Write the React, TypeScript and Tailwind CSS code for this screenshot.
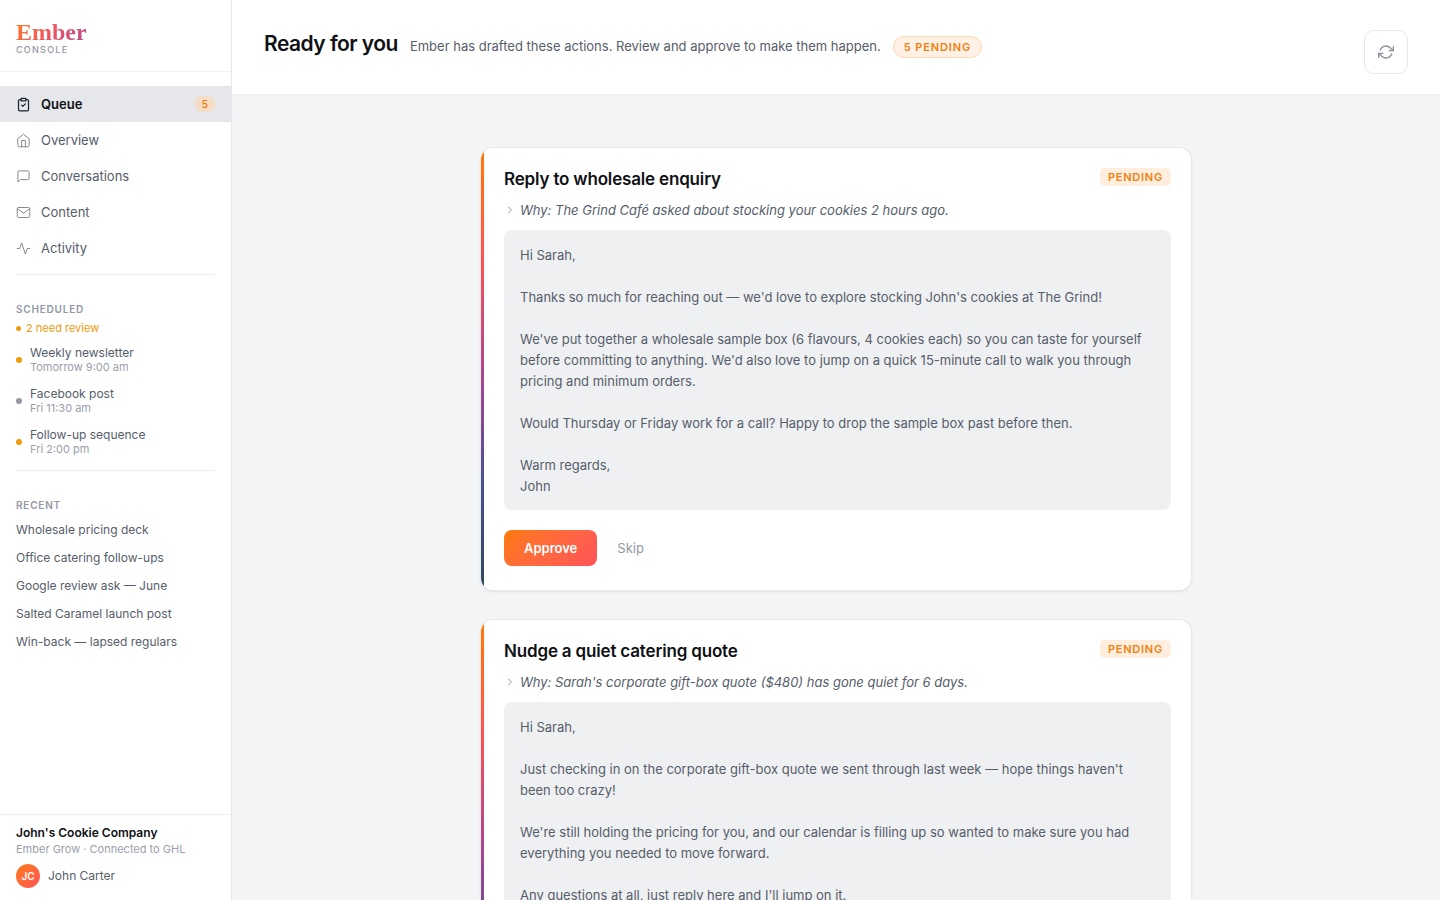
import type { ReactNode } from "react"
import { clsx } from "clsx"

type IconProps = { className?: string; width?: number; children: ReactNode }

function Icon({ className, width = 1.5, children }: IconProps) {
  return (
    <svg
      className={clsx("shrink-0", className)}
      viewBox="0 0 24 24"
      fill="none"
      stroke="currentColor"
      strokeWidth={width}
      strokeLinecap="round"
      strokeLinejoin="round"
      aria-hidden="true"
    >
      {children}
    </svg>
  )
}

const navItems = [
  {
    label: "Queue",
    count: 5,
    icon: (
      <>
        <path d="M16 4h2a2 2 0 0 1 2 2v14a2 2 0 0 1-2 2H6a2 2 0 0 1-2-2V6a2 2 0 0 1 2-2h2" />
        <rect x="8" y="2" width="8" height="4" rx="1" />
        <path d="m9 13 2 2 4-4" />
      </>
    ),
  },
  {
    label: "Overview",
    icon: (
      <>
        <path d="m3 9 9-7 9 7v11a2 2 0 0 1-2 2H5a2 2 0 0 1-2-2z" />
        <path d="M9 22V12h6v10" />
      </>
    ),
  },
  {
    label: "Conversations",
    icon: <path d="M21 15a2 2 0 0 1-2 2H7l-4 4V5a2 2 0 0 1 2-2h14a2 2 0 0 1 2 2z" />,
  },
  {
    label: "Content",
    icon: (
      <>
        <path d="M4 4h16a2 2 0 0 1 2 2v12a2 2 0 0 1-2 2H4a2 2 0 0 1-2-2V6a2 2 0 0 1 2-2z" />
        <path d="m22 6-10 7L2 6" />
      </>
    ),
  },
  {
    label: "Activity",
    icon: <path d="M22 12h-4l-3 9L9 3l-3 9H2" />,
  },
]

const scheduled = [
  { title: "Weekly newsletter", time: "Tomorrow 9:00 am", review: true },
  { title: "Facebook post", time: "Fri 11:30 am", review: false },
  { title: "Follow-up sequence", time: "Fri 2:00 pm", review: true },
]

const recent = [
  "Wholesale pricing deck",
  "Office catering follow-ups",
  "Google review ask — June",
  "Salted Caramel launch post",
  "Win-back — lapsed regulars",
]

const drafts = [
  {
    title: "Reply to wholesale enquiry",
    why: "The Grind Café asked about stocking your cookies 2 hours ago.",
    body: `Hi Sarah,

Thanks so much for reaching out — we'd love to explore stocking John's cookies at The Grind!

We've put together a wholesale sample box (6 flavours, 4 cookies each) so you can taste for yourself before committing to anything. We'd also love to jump on a quick 15-minute call to walk you through pricing and minimum orders.

Would Thursday or Friday work for a call? Happy to drop the sample box past before then.

Warm regards,
John`,
  },
  {
    title: "Nudge a quiet catering quote",
    why: "Sarah's corporate gift-box quote ($480) has gone quiet for 6 days.",
    body: `Hi Sarah,

Just checking in on the corporate gift-box quote we sent through last week — hope things haven't been too crazy!

We're still holding the pricing for you, and our calendar is filling up so wanted to make sure you had everything you needed to move forward.

Any questions at all, just reply here and I'll jump on it.

Warm regards,
John`,
  },
]

function Sidebar() {
  return (
    <aside className="flex w-58 shrink-0 flex-col border-r border-[#e5e7eb] bg-white">
      <div className="border-b border-[#f0f1f3] px-4 pt-5 pb-4">
        <p className="w-fit bg-linear-135 from-[#ff7a00] via-[#f0585c] via-45% to-[#b8458c] bg-clip-text font-['Liberation_Serif',serif] text-2xl leading-6 font-bold text-transparent">
          Ember
        </p>
        <p className="text-[9px] leading-[11px] font-medium tracking-[0.14em] text-[#9298a5]">CONSOLE</p>
      </div>

      <nav className="pt-3.5">
        {navItems.map((item, i) => (
          <a
            key={item.label}
            href="#"
            className={clsx(
              "flex h-9 items-center gap-2.5 px-4 text-[13px] leading-5",
              i === 0 ? "bg-[#e6e7ea] font-semibold text-[#0f1115]" : "text-[#565d6b]"
            )}
          >
            <Icon width={i === 0 ? 2 : 1.5} className={clsx("size-[15px]", i === 0 ? "text-[#1f2430]" : "text-[#7d828c]")}>
              {item.icon}
            </Icon>
            <span className="flex-1">{item.label}</span>
            {item.count && (
              <span className="rounded-full bg-[#f5dcc4] px-[7px] text-[10px] leading-4 font-semibold text-[#f08010]">
                {item.count}
              </span>
            )}
          </a>
        ))}
      </nav>

      <section className="mx-4 mt-2 border-t border-[#eceef0] pt-[27px]">
        <h2 className="text-[10px] leading-[14px] font-semibold tracking-[0.08em] text-[#9298a5]">SCHEDULED</h2>
        <p className="mt-1 flex items-center gap-[5px] text-[11px] leading-4 text-[#ee9b0c]">
          <span className="size-[5px] rounded-full bg-[#ee9b0c]" />2 need review
        </p>
        <ul className="mt-[9px] flex flex-col gap-3">
          {scheduled.map((item) => (
            <li key={item.title} className="flex items-center gap-2">
              <span className={clsx("size-1.5 rounded-full", item.review ? "bg-[#ee9b0c]" : "bg-[#9598a0]")} />
              <div>
                <p className="text-xs leading-[15px] text-[#565d6b]">{item.title}</p>
                <p className="text-[11px] leading-[14px] text-[#9aa0ac]">{item.time}</p>
              </div>
            </li>
          ))}
        </ul>
      </section>

      <section className="mx-4 mt-3.5 border-t border-[#eceef0] pt-[27px]">
        <h2 className="text-[10px] leading-[14px] font-semibold tracking-[0.08em] text-[#9298a5]">RECENT</h2>
        <ul className="mt-1">
          {recent.map((title) => (
            <li key={title}>
              <a href="#" className="block truncate text-xs leading-7 text-[#565d6b]">{title}</a>
            </li>
          ))}
        </ul>
      </section>

      <footer className="mt-auto border-t border-[#eceef0] px-4 pt-2.5 pb-3">
        <p className="text-xs leading-4 font-semibold text-[#0f1115]">John's Cookie Company</p>
        <p className="text-[11px] leading-4 text-[#9aa0ac]">Ember Grow · Connected to GHL</p>
        <div className="mt-[7px] flex items-center gap-2">
          <span className="flex size-6 items-center justify-center rounded-full bg-linear-135 from-[#ff7a00] to-[#ff5252] text-[10px] font-semibold text-white">
            JC
          </span>
          <span className="text-xs text-[#565d6b]">John Carter</span>
        </div>
      </footer>
    </aside>
  )
}

function DraftCard({ title, why, body }: (typeof drafts)[number]) {
  return (
    <article className="flex overflow-hidden rounded-xl bg-white shadow-[0_0_0_1px_#e8eaed,0_1px_3px_rgba(0,0,0,0.16)]">
      <div className="w-[3px] shrink-0 bg-[linear-gradient(180deg,#ff7a00,#ff5252_25%,#b0458e_50%,#4b5091_75%,#2f4858)]" />
      <div className="min-w-0 flex-1 p-5 pb-6">
        <div className="flex items-start justify-between gap-4">
          <h2 className="text-[17px] leading-[22px] font-semibold tracking-[-0.01em] text-[#0f1115]">{title}</h2>
          <span className="rounded-[5px] bg-[#ffeedd] px-2 text-[11px] leading-[18px] font-semibold tracking-[0.07em] text-[#f08010]">
            PENDING
          </span>
        </div>
        <details className="mt-2.5">
          <summary className="flex cursor-pointer list-none items-center gap-1 text-[13px] leading-5 text-[#565d6b] italic">
            <Icon width={2} className="size-3 text-[#9298a5]">
              <path d="m9 18 6-6-6-6" />
            </Icon>
            Why: {why}
          </summary>
        </details>
        <p className="mt-2.5 rounded-lg bg-[#eff0f2] px-4 pt-[15px] pb-[13px] text-[13px] leading-[21px] whitespace-pre-line text-[#565d6b]">
          {body}
        </p>
        <div className="mt-5 flex items-center">
          <button className="rounded-lg bg-linear-135 from-[#ff7a00] to-[#ff5258] px-5 py-2 text-[13px] leading-5 font-semibold text-white">
            Approve
          </button>
          <button className="px-5 py-2 text-[13px] leading-5 text-[#9298a5]">Skip</button>
        </div>
      </div>
    </article>
  )
}

export default function App() {
  return (
    <div className="flex h-screen overflow-hidden bg-[#f3f4f6] font-['Inter',sans-serif]">
      <Sidebar />
      <div className="flex min-w-0 flex-1 flex-col">
        <header className="flex items-start justify-between border-b border-[#eceef0] bg-white px-8 pt-[30px] pb-5">
          <div className="flex flex-wrap items-baseline gap-x-3">
            <h1 className="text-[21px] leading-7 font-semibold tracking-tight text-[#0f1115]">Ready for you</h1>
            <p className="text-[13px] leading-5 text-[#565d6b]">
              Ember has drafted these actions. Review and approve to make them happen.
            </p>
            <span className="rounded-full border border-[#ffd9b3] bg-[#fff1e5] px-2.5 text-[11px] leading-5 font-semibold tracking-[0.08em] text-[#f08010]">
              5 PENDING
            </span>
          </div>
          <button
            aria-label="Refresh"
            className="flex size-11 shrink-0 items-center justify-center rounded-[10px] border border-[#e5e7eb] text-[#8b909a]"
          >
            <Icon width={2} className="size-4">
              <path d="M23 4v6h-6" />
              <path d="M1 20v-6h6" />
              <path d="M3.51 9a9 9 0 0 1 14.85-3.36L23 10M1 14l4.64 4.36A9 9 0 0 0 20.49 15" />
            </Icon>
          </button>
        </header>
        <main className="flex-1 overflow-y-auto px-8 py-[53px]">
          <div className="mx-auto flex max-w-[710px] flex-col gap-[30px]">
            {drafts.map((draft) => (
              <DraftCard key={draft.title} {...draft} />
            ))}
          </div>
        </main>
      </div>
    </div>
  )
}
